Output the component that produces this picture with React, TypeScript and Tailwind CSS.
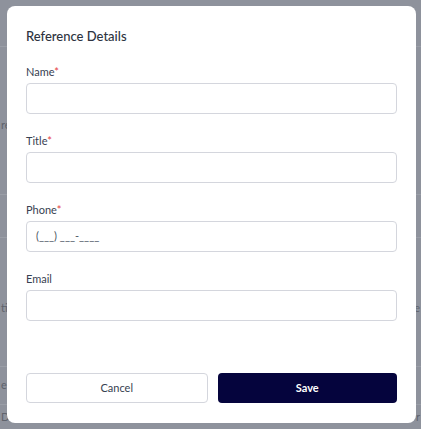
import React from 'react';

const Field: React.FC<{ label: string; required?: boolean; placeholder?: string }> = ({ label, required, placeholder }) => (
  <div className="flex flex-col">
    <label className="text-[11px] leading-[14px] text-[#374151] mb-[4px]">
      {label}
      {required && <span className="text-[#e53e3e]">*</span>}
    </label>
    <div className="h-[31px] rounded-[4px] border border-[#d4d6dd] bg-white px-[9px] flex items-center">
      {placeholder && <span className="text-[11px] text-[#4b5563]">{placeholder}</span>}
    </div>
  </div>
);

// faded page that sits behind the dialog overlay
const BackgroundPage: React.FC = () => (
  <div className="h-[429px] w-full bg-[#8e929c] flex flex-col text-[11px] text-[#5f636c]">
    <div className="h-[47px] border-b border-[#9a9ea7]" />
    <div className="h-[148px] border-b border-[#9a9ea7] flex items-center justify-between pl-[1px] pt-[10px]">
      <span>re</span>
      <span />
    </div>
    <div className="h-[43px] border-b border-[#9a9ea7]" />
    <div className="h-[129px] border-b border-[#9a9ea7] flex items-end justify-between pl-[1px] pr-[1px] pb-[50px]">
      <span>ti</span>
      <span>e</span>
    </div>
    <div className="h-[38px] border-b border-[#9a9ea7] flex items-center justify-between pl-[1px]">
      <span>e</span>
      <span />
    </div>
    <div className="flex-1 flex items-center justify-between pl-[1px] pr-[1px]">
      <span>D</span>
      <span>r</span>
    </div>
  </div>
);

export default function App() {
  return (
    <div className="relative w-[421px] h-[429px] overflow-hidden" style={{ fontFamily: 'Lato, "Noto Sans", sans-serif' }}>
      <BackgroundPage />
      <div className="absolute left-[7px] top-[6px] w-[409px] h-[417px] bg-white rounded-[8px] px-[19px] pt-[20px] pb-[20px] flex flex-col">
        <h2 className="text-[13px] leading-[20px] font-medium text-[#2d3340] mb-[19px]">Reference Details</h2>
        <div className="flex flex-col gap-[20px]">
          <Field label="Name" required />
          <Field label="Title" required />
          <Field label="Phone" required placeholder="(___) ___-____" />
          <Field label="Email" />
        </div>
        <div className="mt-auto flex gap-[10px]">
          <button className="flex-1 h-[30px] rounded-[4px] border border-[#d4d6dd] bg-white text-[11px] text-[#374151]">
            Cancel
          </button>
          <button className="flex-1 h-[30px] rounded-[4px] bg-[#05043d] text-[11px] font-bold text-white">
            Save
          </button>
        </div>
      </div>
    </div>
  );
}
